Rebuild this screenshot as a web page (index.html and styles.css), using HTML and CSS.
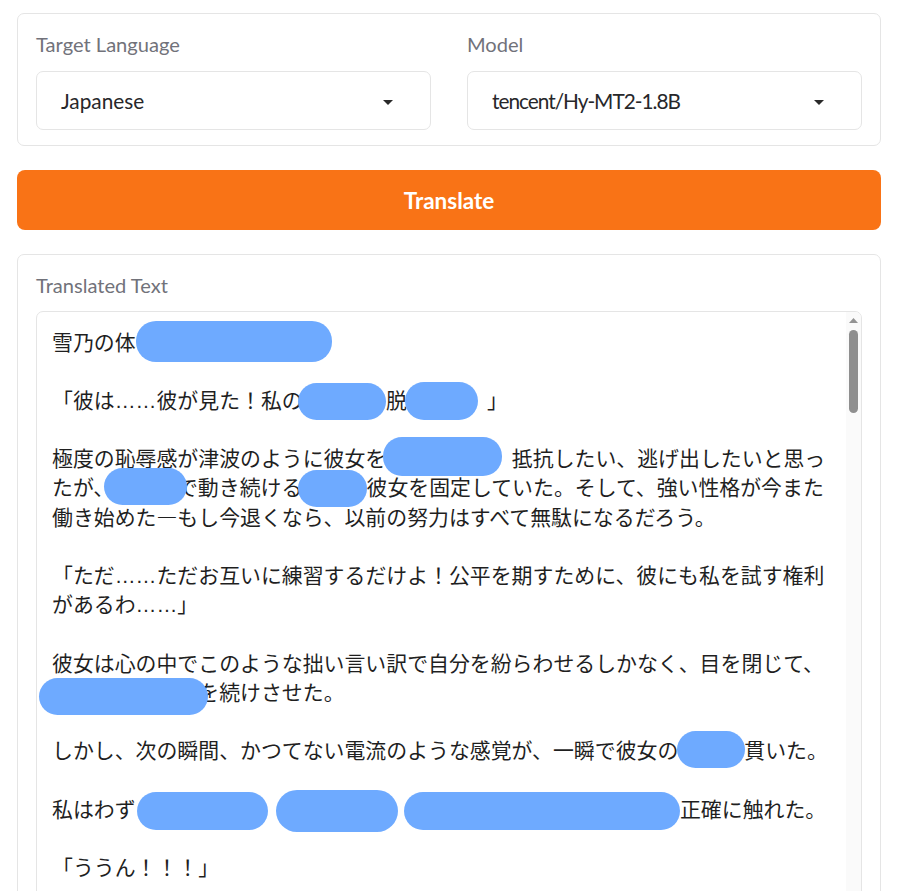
FILE: index.html
```html
<!DOCTYPE html>
<html lang="ja">
<head>
<meta charset="utf-8">
<title>Translator</title>
<link rel="stylesheet" href="styles.css">
</head>
<body>
<div class="page">
  <section class="card settings">
    <div class="field">
      <span class="label">Target Language</span>
      <div class="select">
        <span class="value">Japanese</span>
        <svg class="caret" width="10" height="5" viewBox="0 0 10 5"><path d="M0 0H10L5 5Z"/></svg>
      </div>
    </div>
    <div class="field">
      <span class="label">Model</span>
      <div class="select">
        <span class="value tight">tencent/Hy-MT2-1.8B</span>
        <svg class="caret" width="10" height="5" viewBox="0 0 10 5"><path d="M0 0H10L5 5Z"/></svg>
      </div>
    </div>
  </section>

  <button class="translate">Translate</button>

  <section class="card output">
    <span class="label">Translated Text</span>
    <div class="textarea">
      <div class="text">
        <div class="ln">雪乃の体<span class="rd r1"></span></div>
        <div class="ln"></div>
        <div class="ln">「彼は<span class="ell">……</span>彼が見た！私の<span class="rd r2a"></span>脱<span class="rd r2b"></span>」</div>
        <div class="ln"></div>
        <div class="ln">極度の恥辱感が津波のように彼女を<span class="rd r4"></span>抵抗したい、逃げ出したいと思っ</div>
        <div class="ln">たが、<span class="rd r5a"></span>で動き続ける<span class="rd r5b"></span>彼女を固定していた。そして、強い性格が今また</div>
        <div class="ln">働き始めた—もし今退くなら、以前の努力はすべて無駄になるだろう。</div>
        <div class="ln"></div>
        <div class="ln">「ただ<span class="ell">……</span>ただお互いに練習するだけよ！公平を期すために、彼にも私を試す権利</div>
        <div class="ln">があるわ<span class="ell">……</span>」</div>
        <div class="ln"></div>
        <div class="ln">彼女は心の中でこのような拙い言い訳で自分を紛らわせるしかなく、目を閉じて、</div>
        <div class="ln"><span class="rd r12"></span>を続けさせた。</div>
        <div class="ln"></div>
        <div class="ln">しかし、次の瞬間、かつてない電流のような感覚が、一瞬で彼女の<span class="rd r14"></span>貫いた。</div>
        <div class="ln"></div>
        <div class="ln">私はわず<span class="rd r16a"></span><span class="rd r16b"></span><span class="rd r16c"></span>正確に触れた。</div>
        <div class="ln"></div>
        <div class="ln">「ううん！！！」</div>
      </div>
      <div class="scrollbar">
        <svg class="arrow" width="9" height="5" viewBox="0 0 9 5"><path d="M4.5 0L9 5H0Z"/></svg>
        <div class="thumb"></div>
      </div>
    </div>
  </section>
</div>
</body>
</html>
```
FILE: styles.css
```css
html, body {
  margin: 0;
  padding: 0;
  height: 100%;
  overflow: hidden;
  background: #ffffff;
}

body {
  font-family: Lato, "Noto Sans CJK JP", sans-serif;
  color: #27272a;
}

.page {
  padding: 13px 40px 0 17px;
  display: flex;
  flex-direction: column;
  gap: 24px;
}

.card {
  border: 1px solid #e5e5e5;
  border-radius: 7px;
  background: #ffffff;
  padding: 17px 18px 15px;
}

.settings {
  display: grid;
  grid-template-columns: 1fr 1fr;
  column-gap: 36px;
}

.field {
  display: flex;
  flex-direction: column;
  gap: 14px;
}

.label {
  display: block;
  font-size: 20.1px;
  line-height: 26px;
  color: #71727a;
}

.select {
  box-sizing: border-box;
  height: 59px;
  border: 1px solid #e5e5e5;
  border-radius: 7px;
  padding: 0 37px 0 24px;
  display: flex;
  align-items: center;
  justify-content: space-between;
}

.value {
  font-size: 20.8px;
  line-height: 26px;
  color: #27272a;
}

.value.tight {
  letter-spacing: -1px;
}

.caret {
  fill: #2a2a2a;
  margin-top: 3px;
}

.translate {
  height: 60px;
  border: none;
  border-radius: 8px;
  background: #f97316;
  color: #ffffff;
  font-family: Lato, sans-serif;
  font-weight: 700;
  font-size: 22.5px;
  padding: 0;
  display: flex;
  align-items: center;
  justify-content: center;
}

.output {
  display: flex;
  flex-direction: column;
  gap: 13px;
  padding-bottom: 0;
}

.textarea {
  height: 640px;
  border: 1px solid #e5e5e5;
  border-radius: 7px;
  display: flex;
  overflow: hidden;
}

.text {
  flex: 1;
  padding: 14.5px 15px 0 15px;
  font-family: "Noto Sans CJK JP", sans-serif;
  font-size: 20.9px;
  line-height: 29.2px;
  color: #1f1f1f;
}

.ln {
  height: 29.2px;
  white-space: nowrap;
}

.ell {
  font-family: "Liberation Sans", sans-serif;
}

.scrollbar {
  width: 15px;
  background: #fafafa;
  display: flex;
  flex-direction: column;
  align-items: center;
}

.arrow {
  fill: #939393;
  margin-top: 6px;
}

.thumb {
  width: 9px;
  height: 83px;
  margin-top: 7px;
  border-radius: 4.5px;
  background: #8f8f8f;
}

/* redaction strokes */
.rd {
  display: inline-block;
  position: relative;
  height: 29.2px;
  vertical-align: top;
}

.rd::before {
  content: "";
  position: absolute;
  left: 0;
  right: 0;
  top: -3px;
  height: 38px;
  border-radius: 19px;
  background: #6eaaff;
}

.r1 { width: 196.4px; }
.r1::before { top: -5.5px; height: 41px; border-radius: 20px; }

.r2a { width: 83.2px; }
.r2a::before { left: -4.8px; top: -2px; height: 37px; }

.r2b { width: 80.1px; }
.r2b::before { left: -1.9px; right: 9px; top: -3px; }

.r4 { width: 125.6px; }
.r4::before { left: -3.4px; right: 10px; top: -6px; height: 39px; }

.r5a { width: 62.7px; }
.r5a::before { left: -10.7px; right: -9.6px; top: -4.5px; height: 37px; }

.r5b { width: 64.2px; }
.r5b::before { left: -4.8px; top: -2.5px; height: 37px; }

.r12 { width: 146.3px; }
.r12::before { left: -13px; right: -9.7px; top: 1px; height: 37px; }

.r14 { width: 66px; }
.r14::before { left: -1px; right: -1px; top: -4.3px; height: 37px; }

.r16a { width: 136.4px; }
.r16a::before { left: 1.4px; right: 4px; top: -1.7px; }

.r16b { width: 129px; }
.r16b::before { left: 4px; right: 3px; top: -3.7px; height: 42px; border-radius: 21px; }

.r16c { width: 279px; }
.r16c::before { left: 3px; right: 0; top: -1.7px; }
```
